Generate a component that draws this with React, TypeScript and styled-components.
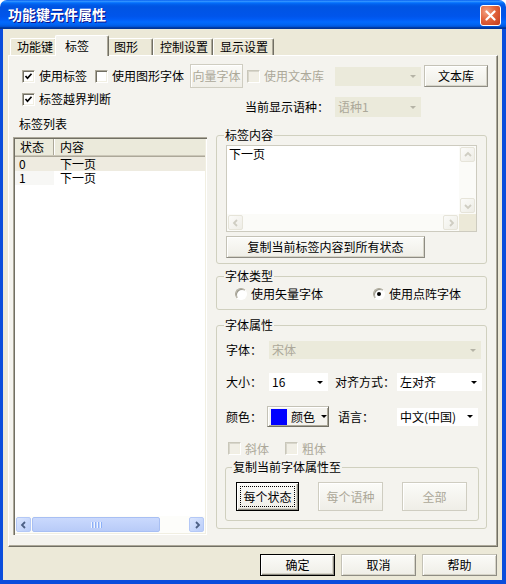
import React from "react";
import styled, { createGlobalStyle } from "styled-components";

const GlobalStyle = createGlobalStyle`
  html, body {
    margin: 0;
    padding: 0;
    background: #ffffff;
  }
  body {
    font-family: "Noto Sans CJK SC", "Noto Sans", sans-serif;
    font-size: 12px;
    color: #000000;
  }
  * {
    box-sizing: border-box;
  }
`;

const Window = styled.div`
    width: 506px;
    height: 584px;
    display: flex;
    flex-direction: column;
`;

const TitleBar = styled.div`
    height: 29px;
    flex: none;
    display: flex;
    align-items: center;
    justify-content: space-between;
    padding: 0 5px 0 8px;
    border-radius: 7px 7px 0 0;
    background: linear-gradient(
        to bottom,
        #0058ee 0%,
        #3593ff 4%,
        #288eff 6%,
        #127dff 8%,
        #036ffc 10%,
        #0262ee 14%,
        #0057e5 20%,
        #0054e3 24%,
        #0055eb 56%,
        #005bf5 66%,
        #026afe 76%,
        #0062ef 86%,
        #0052d6 92%,
        #0040ab 94%,
        #003092 100%
    );
`;

const Title = styled.span`
    color: #ffffff;
    font-weight: bold;
    font-size: 14px;
    line-height: 29px;
    text-shadow: 1px 1px #0f1089;
`;

const CloseButton = styled.div`
    width: 21px;
    height: 21px;
    margin-top: 2px;
    border: 1px solid #ffffff;
    border-radius: 3px;
    display: flex;
    align-items: center;
    justify-content: center;
    background: radial-gradient(circle at 30% 30%, #f3a283 0%, #e2643b 45%, #c23a1c 100%);
`;

const Frame = styled.div`
    flex: 1;
    display: flex;
    flex-direction: column;
    background: #ece9d8;
    border-style: solid;
    border-width: 0 4px 4px 3px;
    border-color: #0a4ddc;
    padding: 6px 4px 0 5px;
`;

const TabStrip = styled.div`
    height: 20px;
    flex: none;
    display: flex;
    align-items: flex-end;
    padding-left: 2px;
    position: relative;
    z-index: 1;
`;

const Tab = styled.div<{ $active?: boolean; $width: number }>`
    width: ${({ $active, $width }) => ($active ? $width + 4 : $width)}px;
    height: ${({ $active }) => ($active ? 21 : 17)}px;
    margin: 0 ${({ $active }) => ($active ? -2 : 0)}px ${({ $active }) => ($active ? -1 : 0)}px;
    padding-left: ${({ $active }) => ($active ? 9 : 6)}px;
    display: flex;
    align-items: center;
    position: relative;
    z-index: ${({ $active }) => ($active ? 2 : 1)};
    background: ${({ $active }) => ($active ? "#f4f3ee" : "#ece9d8")};
    border-top: 1px solid #ffffff;
    border-left: 1px solid #ffffff;
    border-right: 1px solid #716f64;
    box-shadow: inset -1px 0 #aca899;
    border-radius: 2px 2px 0 0;
    line-height: 14px;
`;

const Panel = styled.div`
    height: 492px;
    flex: none;
    position: relative;
    z-index: 0;
    background: #f4f3ee;
    border: 1px solid;
    border-color: #ffffff #716f64 #716f64 #ffffff;
    box-shadow: inset -1px -1px #aca899;
    padding: 8px 0 0 4px;
`;

const TopRows = styled.div`
    padding-left: 9px;
`;

const Row = styled.div<{ $h: number; $align?: string; $mt?: number }>`
    display: flex;
    align-items: ${({ $align }) => $align || "center"};
    height: ${({ $h }) => $h}px;
    margin-top: ${({ $mt }) => $mt || 0}px;
    flex: none;
`;

const CheckLabel = styled.label<{ $ml?: number; $mt?: number; $disabled?: boolean }>`
    display: flex;
    align-items: center;
    gap: 4px;
    height: 14px;
    line-height: 14px;
    margin-left: ${({ $ml }) => $ml || 0}px;
    margin-top: ${({ $mt }) => $mt || 0}px;
    color: ${({ $disabled }) => ($disabled ? "#aca899" : "#000000")};
    white-space: nowrap;
`;

const CheckBox = styled.span<{ $disabled?: boolean }>`
    width: 13px;
    height: 13px;
    flex: none;
    display: flex;
    align-items: center;
    justify-content: center;
    background: ${({ $disabled }) => ($disabled ? "#f1efe6" : "#ffffff")};
    border: 1px solid;
    border-color: ${({ $disabled }) =>
        $disabled ? "#c9c7ba #ffffff #ffffff #c9c7ba" : "#aca899 #ffffff #ffffff #aca899"};
    box-shadow: ${({ $disabled }) =>
        $disabled
            ? "inset 1px 1px #d8d6cb, inset -1px -1px #f1efe2"
            : "inset 1px 1px #716f64, inset -1px -1px #f1efe2"};
`;

const RadioLabel = styled.label<{ $ml?: number }>`
    display: flex;
    align-items: center;
    gap: 4px;
    margin-left: ${({ $ml }) => $ml || 0}px;
    line-height: 14px;
    white-space: nowrap;
`;

const RadioDot = styled.span<{ $checked?: boolean }>`
    width: 12px;
    height: 12px;
    flex: none;
    border-radius: 50%;
    background: #ffffff;
    border: 1px solid;
    border-color: #aca899 #ffffff #ffffff #aca899;
    box-shadow: inset 1px 1px #9a988c;
    display: flex;
    align-items: center;
    justify-content: center;

    &::after {
        content: "";
        width: 4px;
        height: 4px;
        border-radius: 50%;
        background: #000000;
        display: ${({ $checked }) => ($checked ? "block" : "none")};
    }
`;

const Button = styled.button<{ $w: number; $h: number; $ml?: number; $mt?: number; $default?: boolean }>`
    width: ${({ $w }) => $w}px;
    height: ${({ $h }) => $h}px;
    margin: ${({ $mt }) => $mt || 0}px 0 0 ${({ $ml }) => $ml || 0}px;
    padding: 0;
    flex: none;
    font: inherit;
    line-height: 14px;
    color: #000000;
    background: linear-gradient(to bottom, #fbfbf8, #efeee7);
    border: 1px solid;
    border-color: ${({ $default }) => ($default ? "#000000" : "#c4c2b6 #8e8c83 #8e8c83 #c4c2b6")};
    box-shadow: ${({ $default }) =>
        $default
            ? "inset 1px 1px #ffffff, inset -1px -1px #8e8c83, inset -2px -2px #d6d4c8"
            : "inset 1px 1px #ffffff, inset -1px -1px #d6d4c8"};

    &:disabled {
        color: #aca899;
        border-color: #cfcdc1;
        box-shadow: inset 1px 1px #ffffff;
    }
`;

const FocusButton = styled(Button)`
    outline: 1px dotted #000000;
    outline-offset: -5px;
`;

const Select = styled.div<{ $w: number; $h: number; $ml?: number; $disabled?: boolean }>`
    width: ${({ $w }) => $w}px;
    height: ${({ $h }) => $h}px;
    margin-left: ${({ $ml }) => $ml || 0}px;
    flex: none;
    display: flex;
    align-items: center;
    justify-content: space-between;
    padding: 0 5px 0 3px;
    line-height: 14px;
    background: ${({ $disabled }) => ($disabled ? "#ebeadb" : "#ffffff")};
    color: ${({ $disabled }) => ($disabled ? "#aca899" : "#000000")};
`;

const Caret = styled.span<{ $disabled?: boolean; $ml?: number }>`
    width: 0;
    height: 0;
    flex: none;
    margin-left: ${({ $ml }) => $ml || 0}px;
    border-left: 3px solid transparent;
    border-right: 3px solid transparent;
    border-top: 3px solid ${({ $disabled }) => ($disabled ? "#b5b3a6" : "#000000")};
`;

const FieldLabel = styled.span<{ $w: number; $ml?: number }>`
    width: ${({ $w }) => $w}px;
    margin-left: ${({ $ml }) => $ml || 0}px;
    flex: none;
    line-height: 14px;
    white-space: nowrap;
`;

const Columns = styled.div`
    display: flex;
    gap: 9px;
`;

const LeftColumn = styled.div`
    width: 194px;
    display: flex;
    flex-direction: column;
`;

const ListCaption = styled.div`
    height: 13px;
    line-height: 13px;
    padding-left: 6px;
    margin-bottom: 7px;
`;

const ListBox = styled.div`
    height: 398px;
    display: flex;
    flex-direction: column;
    padding: 2px;
    background: #ffffff;
    box-shadow: inset 1px 1px #aca899, inset 2px 2px #716f64, inset -1px -1px #ffffff, inset -2px -2px #f1efe2;
`;

const ListHeader = styled.div`
    height: 18px;
    flex: none;
    display: grid;
    grid-template-columns: 39px 1fr;
    background: #ebeadb;
    box-shadow: inset 0 -1px #aca899, inset 0 -2px #cbc7b8;
`;

const HeaderCell = styled.div<{ $pl: number; $divider?: boolean }>`
    padding-left: ${({ $pl }) => $pl}px;
    line-height: 16px;
    border-right: ${({ $divider }) => ($divider ? "1px solid #aca899" : "none")};
    box-shadow: ${({ $divider }) => ($divider ? "1px 0 #ffffff" : "none")};
    margin-bottom: 2px;
`;

const ListBody = styled.div`
    flex: 1;
`;

const ListRow = styled.div<{ $selected?: boolean }>`
    height: 14px;
    display: grid;
    grid-template-columns: 39px 1fr;
    line-height: 14px;
    background: ${({ $selected }) => ($selected ? "#eeebe0" : "transparent")};
`;

const ListCell = styled.div<{ $pl: number; $shade?: boolean }>`
    padding-left: ${({ $pl }) => $pl}px;
    background: ${({ $shade }) => ($shade ? "#f7f7f5" : "transparent")};
`;

const HScroll = styled.div<{ $disabled?: boolean }>`
    height: 17px;
    flex: none;
    display: flex;
    align-items: center;
    padding: 1px;
    gap: 1px;
    background: ${({ $disabled }) => ($disabled ? "#fbfbf8" : "#fdfdfa")};
`;

const VScroll = styled.div`
    display: flex;
    flex-direction: column;
    justify-content: space-between;
    padding: 1px;
    background: #fbfbf8;
`;

const ScrollButton = styled.div<{ $disabled?: boolean }>`
    width: 15px;
    height: 15px;
    flex: none;
    display: flex;
    align-items: center;
    justify-content: center;
    border-radius: 2px;
    border: 1px solid ${({ $disabled }) => ($disabled ? "#e6e4d9" : "#b4c8f6")};
    background: ${({ $disabled }) =>
        $disabled
            ? "linear-gradient(to bottom right, #fbfbf9, #eeede6)"
            : "linear-gradient(to bottom right, #dbe6fe, #b9cdf9)"};
`;

const Thumb = styled.div<{ $w: number }>`
    width: ${({ $w }) => $w}px;
    height: 15px;
    flex: none;
    display: flex;
    align-items: center;
    justify-content: center;
    gap: 1px;
    border-radius: 2px;
    border: 1px solid #a8bff3;
    background: linear-gradient(to bottom, #cad9fd, #b8cbf8);
`;

const Grip = styled.span`
    width: 1px;
    height: 6px;
    background: #eef4fe;
    box-shadow: 1px 0 #8cb0f8;
    margin-right: 1px;
`;

const TrackFill = styled.div`
    flex: 1;
`;

const RightColumn = styled.div`
    width: 271px;
    padding-top: 11px;
`;

const GroupBox = styled.fieldset<{ $mt?: number; $pb: number; $pl?: number; $w?: number; $ml?: number }>`
    margin: ${({ $mt }) => $mt || 0}px 0 0 ${({ $ml }) => $ml || 0}px;
    width: ${({ $w }) => ($w ? `${$w}px` : "auto")};
    padding: 0 9px ${({ $pb }) => $pb}px ${({ $pl }) => $pl || 9}px;
    border: 1px solid #d0d0bf;
    border-radius: 3px;
    min-width: 0;
`;

const Legend = styled.legend<{ $ml?: number }>`
    padding: 0 1px;
    margin-left: ${({ $ml }) => $ml || -2}px;
    line-height: 14px;
    font-size: 12px;
`;

const ContentArea = styled.div`
    margin-top: 3px;
    width: 251px;
    height: 87px;
    display: grid;
    grid-template-columns: 1fr 17px;
    grid-template-rows: 1fr 17px;
    border: 1px solid #cdcbbf;
    background: #ffffff;
`;

const ContentText = styled.div`
    padding: 1px 2px;
    line-height: 14px;
`;

const Corner = styled.div`
    background: #ece9d8;
`;

const ColorButton = styled.div`
    width: 62px;
    height: 21px;
    flex: none;
    display: flex;
    align-items: center;
    gap: 4px;
    padding-left: 3px;
    line-height: 14px;
    border: 1px solid;
    border-color: #c4c2b6 #716f64 #716f64 #c4c2b6;
    box-shadow: inset 1px 1px #ffffff, inset -1px -1px #aca899;
    background: #f4f3ee;
`;

const Swatch = styled.span<{ $color: string }>`
    width: 16px;
    height: 16px;
    flex: none;
    background: ${({ $color }) => $color};
`;

const CopyButtons = styled.div`
    display: flex;
    gap: 19px;
    margin: 8px 0 0 1px;
`;

const Footer = styled.div`
    display: flex;
    justify-content: flex-end;
    gap: 6px;
    padding: 7px 1px 0 0;
`;

const Check = () => (
    <svg width="9" height="9" viewBox="0 0 9 9">
        <polyline points="1.5,4 3.5,6.3 7.5,1.8" fill="none" stroke="#000" strokeWidth="1.7" />
    </svg>
);

const Chevron = ({ dir, color }: { dir: "left" | "right" | "up" | "down"; color: string }) => {
    const points = {
        left: "5,1 2,4 5,7",
        right: "3,1 6,4 3,7",
        up: "1,5 4,2 7,5",
        down: "1,3 4,6 7,3",
    }[dir];
    return (
        <svg width="8" height="8" viewBox="0 0 8 8">
            <polyline points={points} fill="none" stroke={color} strokeWidth="1.8" />
        </svg>
    );
};

const tabs = [
    { label: "功能键", width: 47 },
    { label: "标签", width: 50, active: true },
    { label: "图形", width: 46 },
    { label: "控制设置", width: 60 },
    { label: "显示设置", width: 61 },
];

const rows = [
    { state: "0", text: "下一页", selected: true },
    { state: "1", text: "下一页" },
];

export default function App() {
    return (
        <>
            <GlobalStyle />
            <Window>
                <TitleBar>
                    <Title>功能键元件属性</Title>
                    <CloseButton>
                        <svg width="11" height="11" viewBox="0 0 11 11">
                            <path d="M1.5 1.5 L9.5 9.5 M9.5 1.5 L1.5 9.5" stroke="#fff" strokeWidth="2.2" strokeLinecap="round" />
                        </svg>
                    </CloseButton>
                </TitleBar>
                <Frame>
                    <TabStrip>
                        {tabs.map((tab) => (
                            <Tab key={tab.label} $active={tab.active} $width={tab.width}>
                                {tab.label}
                            </Tab>
                        ))}
                    </TabStrip>
                    <Panel>
                        <TopRows>
                            <Row $h={24}>
                                <CheckLabel>
                                    <CheckBox><Check /></CheckBox>使用标签
                                </CheckLabel>
                                <CheckLabel $ml={8}>
                                    <CheckBox />使用图形字体
                                </CheckLabel>
                                <Button $w={53} $h={24} $ml={6} disabled>向量字体</Button>
                                <CheckLabel $ml={4} $disabled>
                                    <CheckBox $disabled />使用文本库
                                </CheckLabel>
                                <Select $w={86} $h={19} $ml={11} $disabled>
                                    <span />
                                    <Caret $disabled />
                                </Select>
                                <Button $w={64} $h={22} $ml={3}>文本库</Button>
                            </Row>
                            <Row $h={29} $align="flex-start">
                                <CheckLabel $mt={4}>
                                    <CheckBox><Check /></CheckBox>标签越界判断
                                </CheckLabel>
                                <Row $h={20} $mt={9}>
                                    <FieldLabel $w={90} $ml={134}>当前显示语种：</FieldLabel>
                                    <Select $w={86} $h={20} $disabled>
                                        <span>语种1</span>
                                        <Caret $disabled />
                                    </Select>
                                </Row>
                            </Row>
                        </TopRows>
                        <Columns>
                            <LeftColumn>
                                <ListCaption>标签列表</ListCaption>
                                <ListBox>
                                    <ListHeader>
                                        <HeaderCell $pl={5} $divider>状态</HeaderCell>
                                        <HeaderCell $pl={6}>内容</HeaderCell>
                                    </ListHeader>
                                    <ListBody>
                                        {rows.map((row) => (
                                            <ListRow key={row.state} $selected={row.selected}>
                                                <ListCell $pl={4} $shade={!row.selected}>{row.state}</ListCell>
                                                <ListCell $pl={6}>{row.text}</ListCell>
                                            </ListRow>
                                        ))}
                                    </ListBody>
                                    <HScroll>
                                        <ScrollButton><Chevron dir="left" color="#4d6185" /></ScrollButton>
                                        <Thumb $w={128}>
                                            <Grip /><Grip /><Grip /><Grip />
                                        </Thumb>
                                        <TrackFill />
                                        <ScrollButton><Chevron dir="right" color="#4d6185" /></ScrollButton>
                                    </HScroll>
                                </ListBox>
                            </LeftColumn>
                            <RightColumn>
                                <GroupBox $pb={5}>
                                    <Legend>标签内容</Legend>
                                    <ContentArea>
                                        <ContentText>下一页</ContentText>
                                        <VScroll>
                                            <ScrollButton $disabled><Chevron dir="up" color="#cfcdc2" /></ScrollButton>
                                            <ScrollButton $disabled><Chevron dir="down" color="#cfcdc2" /></ScrollButton>
                                        </VScroll>
                                        <HScroll $disabled>
                                            <ScrollButton $disabled><Chevron dir="left" color="#cfcdc2" /></ScrollButton>
                                            <TrackFill />
                                            <ScrollButton $disabled><Chevron dir="right" color="#cfcdc2" /></ScrollButton>
                                        </HScroll>
                                        <Corner />
                                    </ContentArea>
                                    <Button $w={199} $h={22} $mt={4}>复制当前标签内容到所有状态</Button>
                                </GroupBox>

                                <GroupBox $mt={5} $pb={4}>
                                    <Legend>字体类型</Legend>
                                    <Row $h={22}>
                                        <RadioLabel $ml={9}>
                                            <RadioDot />使用矢量字体
                                        </RadioLabel>
                                        <RadioLabel $ml={50}>
                                            <RadioDot $checked />使用点阵字体
                                        </RadioLabel>
                                    </Row>
                                </GroupBox>

                                <GroupBox $mt={8} $pb={7}>
                                    <Legend>字体属性</Legend>
                                    <Row $h={18} $mt={9}>
                                        <FieldLabel $w={43}>字体：</FieldLabel>
                                        <Select $w={212} $h={18} $disabled>
                                            <span>宋体</span>
                                            <Caret $disabled />
                                        </Select>
                                    </Row>
                                    <Row $h={18} $mt={14}>
                                        <FieldLabel $w={43}>大小：</FieldLabel>
                                        <Select $w={59} $h={18}>
                                            <span>16</span>
                                            <Caret />
                                        </Select>
                                        <FieldLabel $w={62} $ml={7}>对齐方式：</FieldLabel>
                                        <Select $w={85} $h={18}>
                                            <span>左对齐</span>
                                            <Caret />
                                        </Select>
                                    </Row>
                                    <Row $h={21} $mt={15}>
                                        <FieldLabel $w={41}>颜色：</FieldLabel>
                                        <ColorButton>
                                            <Swatch $color="#0000ff" />
                                            颜色
                                            <Caret $ml={2} />
                                        </ColorButton>
                                        <FieldLabel $w={59} $ml={9}>语言：</FieldLabel>
                                        <Select $w={81} $h={18}>
                                            <span>中文(中国)</span>
                                            <Caret />
                                        </Select>
                                    </Row>
                                    <Row $h={13} $mt={15}>
                                        <CheckLabel $ml={2} $disabled>
                                            <CheckBox $disabled />斜体
                                        </CheckLabel>
                                        <CheckLabel $ml={16} $disabled>
                                            <CheckBox $disabled />粗体
                                        </CheckLabel>
                                    </Row>
                                    <GroupBox $mt={5} $pb={9} $pl={9} $w={254} $ml={-1}>
                                        <Legend $ml={-3}>复制当前字体属性至</Legend>
                                        <CopyButtons>
                                            <FocusButton $w={63} $h={29} $default>每个状态</FocusButton>
                                            <Button $w={65} $h={29} disabled>每个语种</Button>
                                            <Button $w={65} $h={29} disabled>全部</Button>
                                        </CopyButtons>
                                    </GroupBox>
                                </GroupBox>
                            </RightColumn>
                        </Columns>
                    </Panel>
                    <Footer>
                        <Button $w={75} $h={22} $default>确定</Button>
                        <Button $w={75} $h={22}>取消</Button>
                        <Button $w={75} $h={22}>帮助</Button>
                    </Footer>
                </Frame>
            </Window>
        </>
    );
}
